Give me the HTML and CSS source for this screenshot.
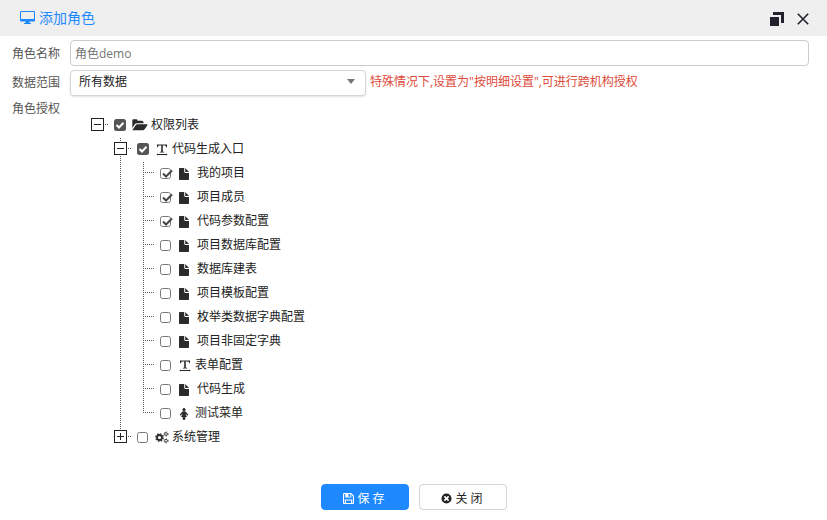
FILE: index.html
```html
<!DOCTYPE html>
<html lang="zh-CN">
<head>
<meta charset="utf-8">
<title>添加角色</title>
<link rel="stylesheet" href="styles.css">
</head>
<body>
<svg class="defs" width="0" height="0">
  <symbol id="file" viewBox="0 0 10 12"><path d="M0 .8Q0 0 .8 0H5.200V3.800Q5.200 4.900 6.300 4.900H10V11.200Q10 12 9.200 12H.8Q0 12 0 11.200ZM6.200 0L10 3.900H6.200Z"/></symbol>
  <symbol id="text" viewBox="0 0 12 12"><path d="M1 .5H11V3.200H10.300Q10 1.400 8.900 1.400H6.800V7.600L8.200 8V8.500H3.800V8L5.200 7.600V1.400H3.100Q2 1.400 1.700 3.200H1ZM2 10.100H10V9.400L11.700 10.500L10 11.600V10.900H2V11.600L.3 10.500L2 9.400Z"/></symbol>
</svg>
<header class="titlebar">
  <svg class="monitor" viewBox="0 0 16 14"><path fill-rule="evenodd" d="M1 0H14Q15 0 15 1V9.500Q15 10.500 14 10.500H9.500V12H11V13H4V12H5.500V10.500H1Q0 10.500 0 9.500V1Q0 0 1 0ZM1 1V8H14V1Z"/></svg>
  <h1>添加角色</h1>
  <svg class="restore" viewBox="0 0 14 14"><path d="M0 5H9V14H0ZM3 0H14V11H11V3H3Z"/></svg>
  <svg class="close" viewBox="0 0 12 12"><path d="M.8.8L11.200 11.200M11.200.8L.8 11.200"/></svg>
</header>
<main class="form">
  <div class="field name-field"><label for="name">角色名称</label><input id="name" class="control" placeholder="角色demo"></div>
  <div class="field scope-field"><span class="label">数据范围</span><div class="control select"><span>所有数据</span><i class="caret"></i></div><span class="hint">特殊情况下,设置为"按明细设置",可进行跨机构授权</span></div>
  <div class="field tree-field"><span class="label">角色授权</span>
    <ul class="tree">
      <li><div class="row"><i class="toggle"></i><i class="stub"></i><i class="check full"><svg viewBox="0 0 12 12"><path d="M2.500 6L5 8.500L9.500 3.800"/></svg></i>
        <svg class="icon folder" viewBox="0 0 16 12"><path d="M.3 9V1.500Q.3.300 1.500.3H4.500Q5.700.3 5.700 1.800H10Q11.500 1.800 11.500 3.300V4.300H5Q3.500 4.300 2.700 5.500ZM.6 10.700L3.500 6.500Q4.300 5.300 5.500 5.300H15Q16 5.300 15.400 6.300L12.800 10Q12 11.200 10.800 11.200H1.200Q.3 11.200.6 10.700Z"/></svg><span>权限列表</span></div>
        <ul>
          <li><div class="row"><i class="toggle"></i><i class="stub"></i><i class="check full"><svg viewBox="0 0 12 12"><path d="M2.500 6L5 8.500L9.500 3.800"/></svg></i><svg class="icon text"><use href="#text"/></svg><span>代码生成入口</span></div>
            <ul>
              <li><div class="row"><i class="leaf"></i><i class="check on"><svg viewBox="0 0 13 12"><path d="M3 5.500L6 8.500L12 2.500"/></svg></i><svg class="icon file"><use href="#file"/></svg><span>我的项目</span></div></li>
              <li><div class="row"><i class="leaf"></i><i class="check on"><svg viewBox="0 0 13 12"><path d="M3 5.500L6 8.500L12 2.500"/></svg></i><svg class="icon file"><use href="#file"/></svg><span>项目成员</span></div></li>
              <li><div class="row"><i class="leaf"></i><i class="check on"><svg viewBox="0 0 13 12"><path d="M3 5.500L6 8.500L12 2.500"/></svg></i><svg class="icon file"><use href="#file"/></svg><span>代码参数配置</span></div></li>
              <li><div class="row"><i class="leaf"></i><i class="check"></i><svg class="icon file"><use href="#file"/></svg><span>项目数据库配置</span></div></li>
              <li><div class="row"><i class="leaf"></i><i class="check"></i><svg class="icon file"><use href="#file"/></svg><span>数据库建表</span></div></li>
              <li><div class="row"><i class="leaf"></i><i class="check"></i><svg class="icon file"><use href="#file"/></svg><span>项目模板配置</span></div></li>
              <li><div class="row"><i class="leaf"></i><i class="check"></i><svg class="icon file"><use href="#file"/></svg><span>枚举类数据字典配置</span></div></li>
              <li><div class="row"><i class="leaf"></i><i class="check"></i><svg class="icon file"><use href="#file"/></svg><span>项目非固定字典</span></div></li>
              <li><div class="row"><i class="leaf"></i><i class="check"></i><svg class="icon text"><use href="#text"/></svg><span>表单配置</span></div></li>
              <li><div class="row"><i class="leaf"></i><i class="check"></i><svg class="icon file"><use href="#file"/></svg><span>代码生成</span></div></li>
              <li><div class="row"><i class="leaf"></i><i class="check"></i><svg class="icon person" viewBox="0 0 10 12"><circle cx="5" cy="1.600" r="1.600"/><path d="M3.700 3.300H6.300L9.300 6.800L8.500 7.700L6.600 5.700V6.200L8 9H6.300V11.800H3.700V9H2L3.400 6.200V5.700L1.500 7.700L.7 6.800Z"/></svg><span>测试菜单</span></div></li>
            </ul>
          </li>
          <li><div class="row"><i class="toggle plus"></i><i class="stub"></i><i class="check"></i>
            <svg class="icon gears" viewBox="0 0 14 13"><g fill="none" stroke="currentColor"><circle cx="4.500" cy="6.500" r="2.500" stroke-width="1.800"/><circle cx="4.500" cy="6.500" r="3.800" stroke-width="1.200" stroke-dasharray="1.490 1.490"/><circle cx="11" cy="3" r="1.400" stroke-width=".9"/><circle cx="11" cy="3" r="2.200" stroke-width=".6" stroke-dasharray="1.150 1.150"/><circle cx="11" cy="9.800" r="1.400" stroke-width=".9"/><circle cx="11" cy="9.800" r="2.200" stroke-width=".6" stroke-dasharray="1.150 1.150"/></g></svg><span>系统管理</span></div></li>
        </ul>
      </li>
    </ul>
  </div>
</main>
<footer class="actions">
  <button class="btn primary"><svg viewBox="0 0 12 12"><path fill-rule="evenodd" d="M1 0H9L12 3V11Q12 12 11 12H1Q0 12 0 11V1Q0 0 1 0ZM1.200 1.200V10.800H2V7H10V10.800H10.800V3.500L9 1.500V5H2.500V1.200ZM6 1V4H8V1ZM3.200 8.200V10.800H8.800V8.200Z"/></svg><span>保 存</span></button>
  <button class="btn"><svg viewBox="0 0 12 12"><path fill-rule="evenodd" d="M6 .5A5.500 5.500 0 1 1 6 11.500A5.500 5.500 0 1 1 6 .5ZM4.300 3L3 4.300L4.700 6L3 7.700L4.300 9L6 7.300L7.700 9L9 7.700L7.300 6L9 4.300L7.700 3L6 4.700Z"/></svg><span>关 闭</span></button>
</footer>
</body>
</html>
```
FILE: styles.css
```css
* { box-sizing: border-box; }
body {
  margin: 0;
  height: 520px;
  display: flex;
  flex-direction: column;
  overflow: hidden;
  background: #fff;
  color: #222;
  font: 12px/24px "Open Sans", "Noto Sans CJK SC", sans-serif;
}
.defs { display: none; }
svg { display: block; flex: none; fill: currentColor; }
ul { list-style: none; margin: 0; padding: 0; }
i { display: block; flex: none; }

.titlebar {
  display: flex;
  align-items: center;
  height: 36px;
  padding: 0 18px 0 20px;
  background: #efefef;
  color: #1e88ff;
}
.titlebar h1 { margin: 0 auto 0 3px; font-size: 14px; font-weight: 400; }
.monitor { width: 16px; height: 14px; }
.restore { width: 14px; height: 14px; margin: 2px 13px 0 0; color: #22222e; }
.close { width: 12px; height: 12px; margin-top: 2px; fill: none; stroke: #22222e; stroke-width: 1.6; }

.form { flex: 1; padding: 4px 18px 0 12px; }
.field { display: flex; }
.field label, .label { width: 58px; flex: none; color: #555; white-space: nowrap; line-height: 28px; }
.scope-field .label { line-height: 26px; }
.control { height: 26px; border: 1px solid #ccc; border-radius: 4px; background: #fff; }
.name-field { height: 30px; }
input.control {
  flex: 1;
  min-width: 0;
  padding: 1px 4px 0;
  font: inherit;
  outline: 0;
}
input::placeholder { color: #757575; opacity: 1; }
.scope-field { height: 25px; }
.select {
  display: flex;
  align-items: center;
  justify-content: space-between;
  width: 296px;
  padding: 0 10px 2px 8px;
  border-color: #d5d5d5;
  box-shadow: 0 1px 2px rgba(0, 0, 0, .12);
}
.caret { margin-bottom: 1px; border: 4px solid transparent; border-top: 5px solid #777; border-bottom: 0; }
.hint { margin-left: 4px; color: #dd4b39; }

.tree { margin: 18px 0 0 21px; }
.tree ul {
  margin-left: 23px;
  background: repeating-linear-gradient(transparent 0 1px, #555 1px 2px) 6px 0 / 1px calc(100% - 12px) no-repeat;
}
.row { display: flex; align-items: center; height: 24px; white-space: nowrap; }
.toggle {
  width: 13px;
  height: 13px;
  margin-bottom: 1px;
  border: 1px solid #222;
  background: linear-gradient(#222, #222) center / 7px 1px no-repeat #fff;
}
.plus {
  background: linear-gradient(#222, #222) center / 7px 1px no-repeat, linear-gradient(#222, #222) center / 1px 7px no-repeat, #fff;
}
.stub { width: 4px; height: 1px; margin: 0 6px 1px 0; background: repeating-linear-gradient(90deg, transparent 0 1px, #555 1px 2px); }
.leaf { width: 10px; height: 1px; margin: 0 5px 1px 8px; background: repeating-linear-gradient(90deg, #555 0 1px, transparent 1px 2px); }
.check { width: 11px; height: 11px; margin: 1px 8px 0 0; border: 1px solid #777; border-radius: 2.5px; }
.check.full { width: 12px; height: 12px; margin: 0 7px 0 0; border: 0; background: #555; }
.check svg { fill: none; stroke: #444; stroke-width: 2; }
.full svg { width: 12px; height: 12px; }
.check.full svg { stroke: #fff; }
.on svg { width: 13px; height: 12px; margin: -1px; }
.icon { color: #2b2b2b; }
.file { width: 10px; height: 12px; margin: 2px 8px 0 0; }
.text { width: 12px; height: 12px; margin: 2px 4px 0 0; }
.folder { width: 16px; height: 12px; margin: 0 3px 0 -1px; }
.person { width: 10px; height: 12px; margin: 2px 6px 0 0; }
.gears { width: 14px; height: 13px; margin: 0 3px 0 -1px; }

.actions { display: flex; justify-content: center; gap: 10px; height: 36px; flex: none; }
.btn {
  display: flex;
  align-items: center;
  justify-content: center;
  gap: 3px;
  width: 88px;
  height: 26px;
  padding: 3px 1px 0 0;
  border: 1px solid #d5d5d5;
  border-radius: 4px;
  background: #fff;
  color: #222;
  font: inherit;
}
.btn svg { width: 11px; height: 11px; }
.btn.primary { border-color: #1e88ff; background: #1e88ff; color: #fff; }
```
